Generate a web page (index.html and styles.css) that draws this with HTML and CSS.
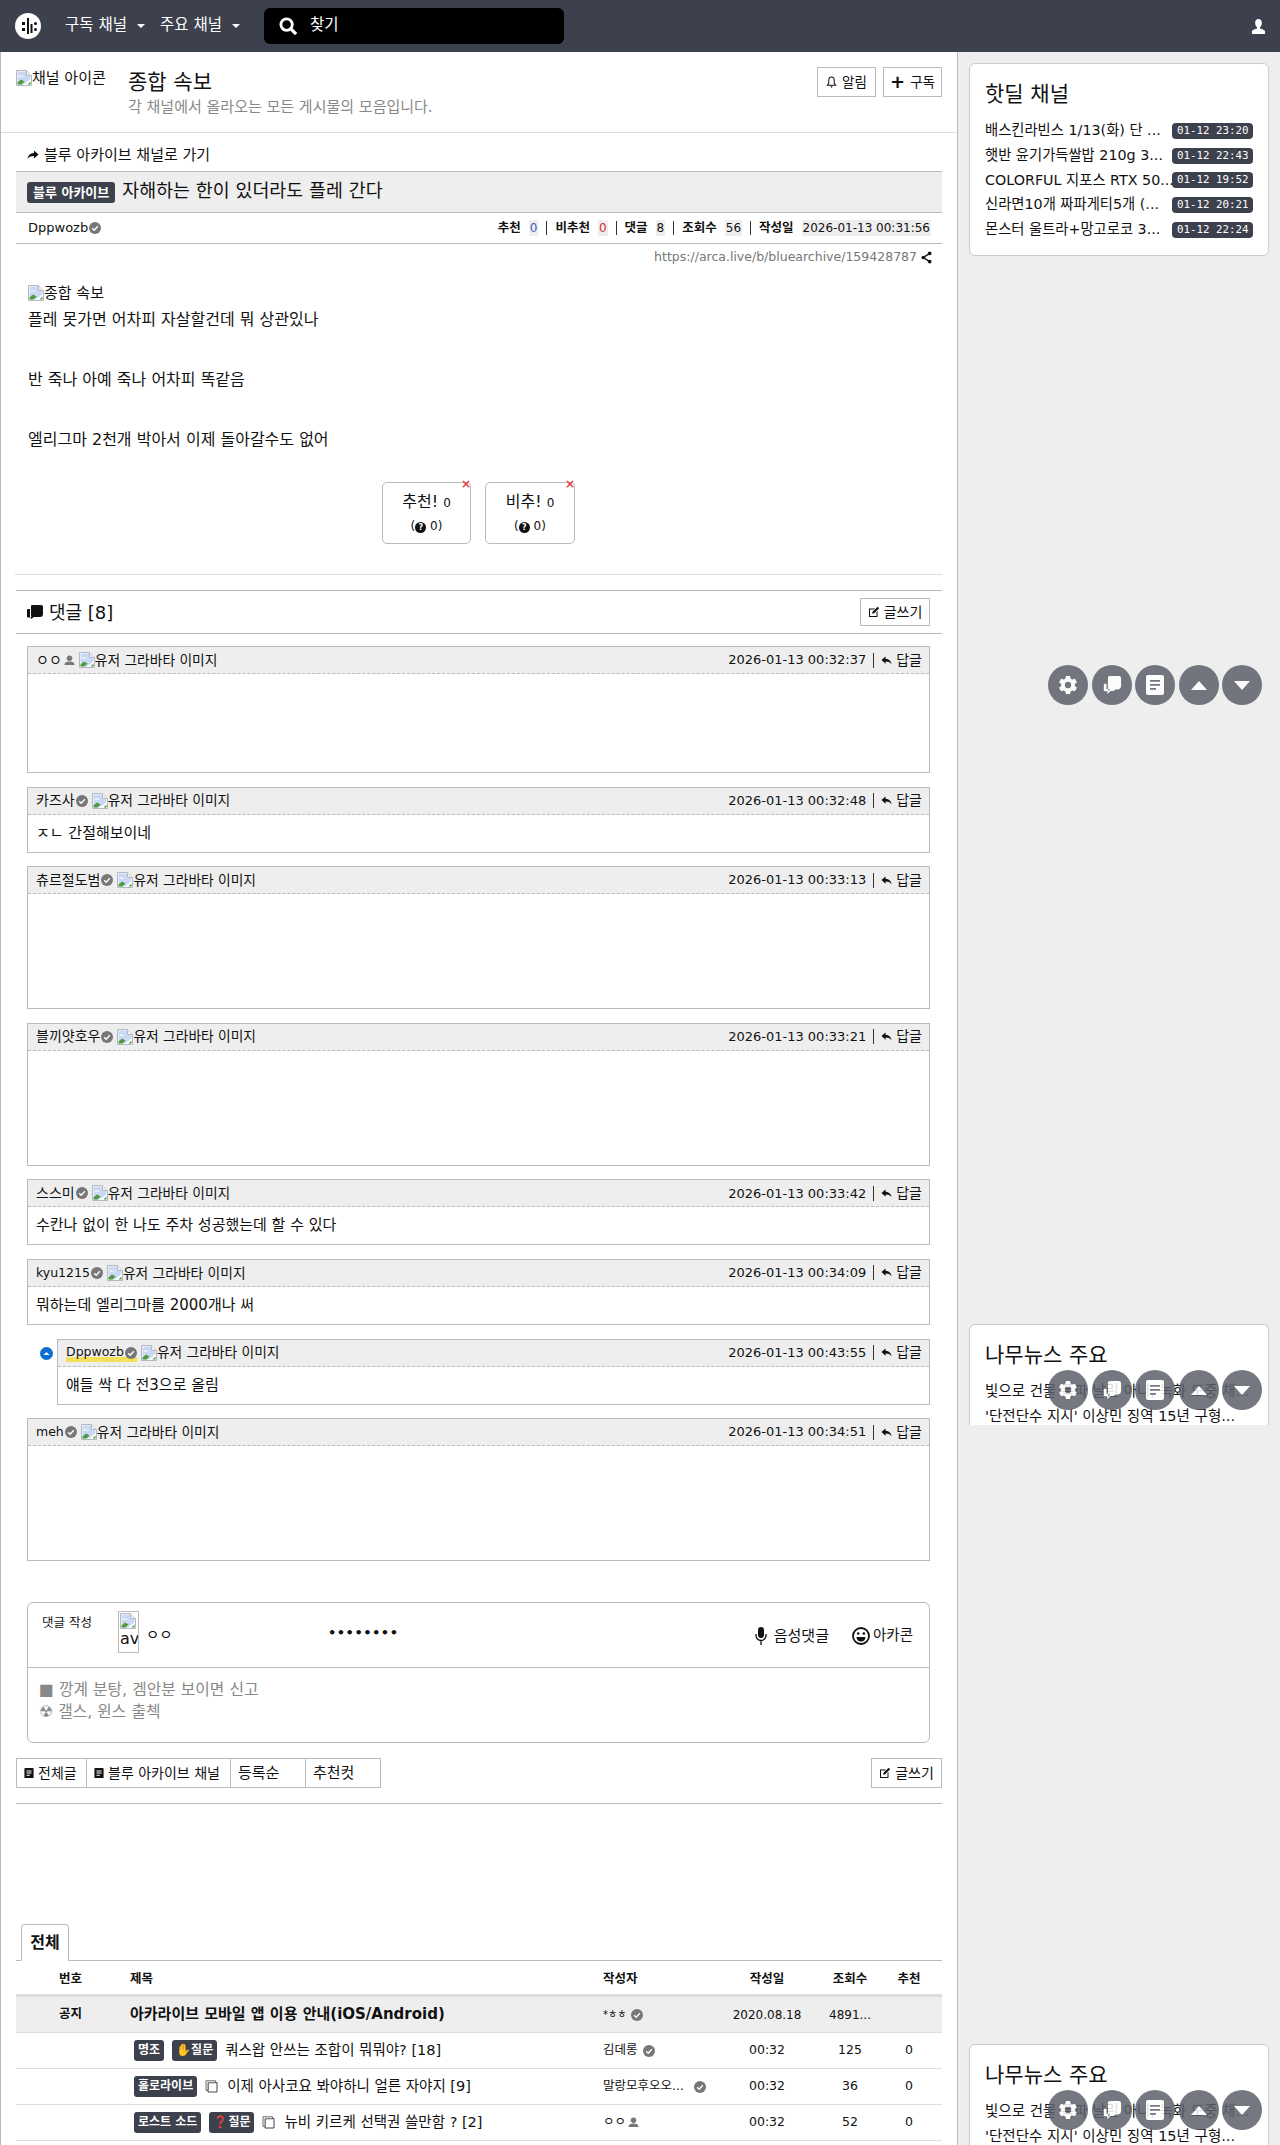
FILE: index.html
```html
<!DOCTYPE html>
<html lang="ko">
<head>
<meta charset="utf-8">
<title>자해하는 한이 있더라도 플레 간다</title>
<link rel="stylesheet" href="styles.css">
</head>
<body>
<svg class="sprite" aria-hidden="true">
  <symbol id="broken" viewBox="0 0 16 16"><path d="M.5.5h10l5 5v10H.5z" fill="#fff" stroke="#b4b9c0"/><path d="M10.5.5v5h5" fill="#eef0f2" stroke="#b4b9c0"/><path d="M1.5 1.5h8.5v4.5h4.5V9L8 14.5H1.500z" fill="#c9d8f5"/><path d="M2 7c1-2 3-2 4-1 .8-.6 2-.4 2.4.6H2z" fill="#fff"/><path d="M1.500 14.500v-2L5 9.500l3.500 2-3 3z" fill="#4f9a3d"/><path d="M14.500 14.500v-3l-3 3z" fill="#4f9a3d"/></symbol>
  <symbol id="check" viewBox="0 0 12 12"><circle cx="6" cy="6" r="6" fill="#777"/><path d="M3.200 6.200l2 2 3.600-4" fill="none" stroke="#fff" stroke-width="1.400"/></symbol>
  <symbol id="reply" viewBox="0 0 12 12"><path d="M5 1.500L.5 5.500 5 9.500V7c3 0 5 .8 6.500 3C11 6.500 9 4.300 5 4z" fill="#111"/></symbol>
  <symbol id="forward" viewBox="0 0 12 12"><path d="M7 1.500l4.500 4L7 9.500V7c-3 0-5 .8-6.500 3C1 6.500 3 4.300 7 4z" fill="#111"/></symbol>
  <symbol id="edit" viewBox="0 0 12 12"><path d="M1 2.500h6L6 3.500H2v6.500h6.500V6l1-1v6H1z" fill="#111"/><path d="M4.500 5.800L9.700.8l1.500 1.500-5 5-2 .4z" fill="#111"/></symbol>
  <symbol id="doc" viewBox="0 0 12 12"><path d="M1.500 0h9a1 1 0 0 1 1 1v10a1 1 0 0 1-1 1h-9a1 1 0 0 1-1-1V1a1 1 0 0 1 1-1z" fill="#111"/><path d="M3 3h6v1.200H3zM3 5.500h6v1.200H3zM3 8h4v1.200H3z" fill="#fff"/></symbol>
  <symbol id="page" viewBox="0 0 13 13"><path d="M3 2.500h9v9.500H3z" fill="#fff" stroke="#444"/><path d="M1 .8h9.500v2H3v7.500H1z" fill="#fff" stroke="#444" stroke-width=".8"/></symbol>
  <symbol id="gear" viewBox="0 0 20 20"><path d="M8 1h4l.6 2.600 1.700 1 2.600-.8 2 3.400-2 1.900v1.800l2 1.900-2 3.400-2.600-.8-1.700 1L12 19H8l-.6-2.600-1.700-1-2.600.8-2-3.400 2-1.900V9.100l-2-1.900 2-3.400 2.600.8 1.700-1z" fill="#fff"/><circle cx="10" cy="10" r="3.200" fill="#5d616b"/></symbol>
  <symbol id="chat" viewBox="0 0 22 22"><path d="M3 9.500h2v6h2v2.500l2.500-2.500h5l-1.500 2H9.500L6 21v-3H3.500A1.500 1.500 0 0 1 2 16.500V11A1.500 1.500 0 0 1 3 9.500z" fill="#fff"/><path d="M8.500 1h10A2.500 2.500 0 0 1 21 3.500v8a4.500 4.500 0 0 1-4.500 4.500H8A1.500 1.500 0 0 1 6.500 14.500V3A2 2 0 0 1 8.500 1z" fill="#fff"/></symbol>
  <symbol id="sheet" viewBox="0 0 20 20"><rect x="1" y="0" width="18" height="20" rx="2" fill="#fff"/><path d="M5 5h10v1.800H5zM5 9h10v1.800H5zM5 13h6v1.800H5z" fill="#5d616b"/></symbol>
  <symbol id="logo" viewBox="0 0 26 26"><circle cx="13" cy="13" r="13" fill="#fff"/><path d="M12 5h2v16h-2zM15.500 11h2v9h-2z" fill="#111"/><rect x="7" y="9" width="3" height="3" fill="#111"/><rect x="7" y="15" width="3" height="3" fill="#111"/><circle cx="20.500" cy="10.500" r="1.500" fill="#111"/><circle cx="20.500" cy="16.500" r="1.500" fill="#111"/></symbol>
</svg>

<header class="topbar">
  <svg class="logo"><use href="#logo"/></svg>
  <nav class="topnav">
    <span class="topnav-item">구독 채널<i class="caret"></i></span>
    <span class="topnav-item">주요 채널<i class="caret"></i></span>
  </nav>
  <div class="search">
    <svg class="search-icon" viewBox="0 0 20 20"><circle cx="8" cy="8" r="6" fill="none" stroke="#fff" stroke-width="3"/><path d="M12.500 12.500l5.500 5.500" stroke="#fff" stroke-width="3.500"/></svg>
    <span>찾기</span>
  </div>
  <svg class="user-icon" viewBox="0 0 16 16"><path d="M8 0c2.400 0 3.600 1.800 3.600 4.200 0 2-.9 3.600-2 4.400v1.400c2 .7 5.400 1.400 5.400 3.500V16H1v-2.500c0-2.100 3.400-2.800 5.400-3.500V8.600c-1.100-.8-2-2.400-2-4.400C4.400 1.800 5.600 0 8 0z" fill="#fff"/></svg>
</header>

<div class="layout">
  <main class="main">
    <section class="channel-head">
      <div class="channel-icon"><svg class="broken"><use href="#broken"/></svg><span>채널 아이콘</span></div>
      <div class="channel-text">
        <h1 class="channel-title">종합 속보</h1>
        <p class="channel-desc">각 채널에서 올라오는 모든 게시물의 모음입니다.</p>
      </div>
      <div class="channel-actions">
        <span class="btn btn-head"><svg class="ico-bell" viewBox="0 0 12 14"><path d="M6 1.500c2 0 3 1.500 3 3.500v3.500l1.500 2h-9l1.500-2V5c0-2 1-3.500 3-3.500z" fill="none" stroke="#111" stroke-width="1.100"/><path d="M4.800 11.500h2.400L6 13.500z" fill="#111"/></svg>알림</span>
        <span class="btn btn-head"><b class="plus">+</b>구독</span>
      </div>
    </section>

    <div class="content">
      <a class="back-link"><svg class="ico12"><use href="#forward"/></svg>블루 아카이브 채널로 가기</a>
      <div class="title-bar"><span class="badge badge-title">블루 아카이브</span><span class="post-title">자해하는 한이 있더라도 플레 간다</span></div>
      <div class="meta-row">
        <span class="meta-author">Dppwozb<svg class="check"><use href="#check"/></svg></span>
        <span class="meta-stats">
          <b>추천</b><em class="stat stat-up">0</em><i class="sep"></i>
          <b>비추천</b><em class="stat stat-down">0</em><i class="sep"></i>
          <b>댓글</b><em class="stat">8</em><i class="sep"></i>
          <b>조회수</b><em class="stat">56</em><i class="sep"></i>
          <b>작성일</b><em class="stat">2026-01-13 00:31:56</em>
        </span>
      </div>
      <div class="url-row">https://arca.live/b/bluearchive/159428787<svg class="ico-share" viewBox="0 0 12 14"><path d="M9.500 2.500L2.500 7l7 4.500" fill="none" stroke="#111" stroke-width="1.600"/><circle cx="9.500" cy="2.500" r="2" fill="#111"/><circle cx="2.500" cy="7" r="2" fill="#111"/><circle cx="9.500" cy="11.500" r="2" fill="#111"/></svg></div>

      <article class="article">
        <div class="article-img"><svg class="broken"><use href="#broken"/></svg><span>종합 속보</span></div>
        <p>플레 못가면 어차피 자살할건데 뭐 상관있나</p>
        <p>반 죽나 아예 죽나 어차피 똑같음</p>
        <p>엘리그마 2천개 박아서 이제 돌아갈수도 없어</p>
      </article>

      <div class="votes">
        <div class="vote"><i class="vote-x">×</i><div class="vote-main">추천! <small>0</small></div><div class="vote-sub">(<i class="q">?</i> 0)</div></div>
        <div class="vote vote-down"><i class="vote-x">×</i><div class="vote-main">비추! <small>0</small></div><div class="vote-sub">(<i class="q">?</i> 0)</div></div>
      </div>

      <div class="comments-title">
        <span class="comments-heading"><svg class="ico-comments" viewBox="0 0 16 14"><path d="M5 0h9a2 2 0 0 1 2 2v7a3 3 0 0 1-3 3H5a1 1 0 0 1-1-1V1a1 1 0 0 1 1-1z" fill="#111"/><path d="M0 5a1 1 0 0 1 1-1h2v8h4l-3 2v-1.500H1a1 1 0 0 1-1-1z" fill="#111"/></svg>댓글 [8]</span>
        <span class="btn btn-write"><svg class="ico12"><use href="#edit"/></svg>글쓰기</span>
      </div>

      <div class="comment comment-img">
        <div class="comment-head"><span class="nick nick-ko">ㅇㅇ<svg class="ico-person" viewBox="0 0 12 12"><circle cx="6" cy="3.500" r="3" fill="#777"/><path d="M.5 11c0-3 2.500-4 5.500-4s5.500 1 5.500 4z" fill="#777"/></svg></span><svg class="broken"><use href="#broken"/></svg><span class="alt">유저 그라바타 이미지</span><span class="comment-right">2026-01-13 00:32:37<i class="sep"></i><svg class="ico12"><use href="#reply"/></svg><span class="reply-word">답글</span></span></div>
      </div>
      <div class="comment">
        <div class="comment-head"><span class="nick nick-ko">카즈사<svg class="check"><use href="#check"/></svg></span><svg class="broken"><use href="#broken"/></svg><span class="alt">유저 그라바타 이미지</span><span class="comment-right">2026-01-13 00:32:48<i class="sep"></i><svg class="ico12"><use href="#reply"/></svg><span class="reply-word">답글</span></span></div>
        <div class="comment-body">ㅈㄴ 간절해보이네</div>
      </div>
      <div class="comment comment-img comment-tall">
        <div class="comment-head"><span class="nick nick-ko">츄르절도범<svg class="check"><use href="#check"/></svg></span><svg class="broken"><use href="#broken"/></svg><span class="alt">유저 그라바타 이미지</span><span class="comment-right">2026-01-13 00:33:13<i class="sep"></i><svg class="ico12"><use href="#reply"/></svg><span class="reply-word">답글</span></span></div>
      </div>
      <div class="comment comment-img comment-tall">
        <div class="comment-head"><span class="nick nick-ko">블끼얏호우<svg class="check"><use href="#check"/></svg></span><svg class="broken"><use href="#broken"/></svg><span class="alt">유저 그라바타 이미지</span><span class="comment-right">2026-01-13 00:33:21<i class="sep"></i><svg class="ico12"><use href="#reply"/></svg><span class="reply-word">답글</span></span></div>
      </div>
      <div class="comment">
        <div class="comment-head"><span class="nick nick-ko">스스미<svg class="check"><use href="#check"/></svg></span><svg class="broken"><use href="#broken"/></svg><span class="alt">유저 그라바타 이미지</span><span class="comment-right">2026-01-13 00:33:42<i class="sep"></i><svg class="ico12"><use href="#reply"/></svg><span class="reply-word">답글</span></span></div>
        <div class="comment-body">수칸나 없이 한 나도 주차 성공했는데 할 수 있다</div>
      </div>
      <div class="comment">
        <div class="comment-head"><span class="nick">kyu1215<svg class="check"><use href="#check"/></svg></span><svg class="broken"><use href="#broken"/></svg><span class="alt">유저 그라바타 이미지</span><span class="comment-right">2026-01-13 00:34:09<i class="sep"></i><svg class="ico12"><use href="#reply"/></svg><span class="reply-word">답글</span></span></div>
        <div class="comment-body">뭐하는데 엘리그마를 2000개나 써</div>
      </div>
      <div class="comment-reply">
        <svg class="reply-dot" viewBox="0 0 13 13"><circle cx="6.500" cy="6.500" r="6.500" fill="#0a6fd0"/><path d="M3.500 8l3-3 3 3z" fill="#fff"/></svg>
        <div class="comment">
          <div class="comment-head"><span class="nick nick-op">Dppwozb<svg class="check"><use href="#check"/></svg></span><svg class="broken"><use href="#broken"/></svg><span class="alt">유저 그라바타 이미지</span><span class="comment-right">2026-01-13 00:43:55<i class="sep"></i><svg class="ico12"><use href="#reply"/></svg><span class="reply-word">답글</span></span></div>
          <div class="comment-body">얘들 싹 다 전3으로 올림</div>
        </div>
      </div>
      <div class="comment comment-img comment-tall">
        <div class="comment-head"><span class="nick">meh<svg class="check"><use href="#check"/></svg></span><svg class="broken"><use href="#broken"/></svg><span class="alt">유저 그라바타 이미지</span><span class="comment-right">2026-01-13 00:34:51<i class="sep"></i><svg class="ico12"><use href="#reply"/></svg><span class="reply-word">답글</span></span></div>
      </div>

      <section class="write">
        <div class="write-top">
          <span class="write-label">댓글 작성</span>
          <span class="avatar"><svg class="broken"><use href="#broken"/></svg><span>av</span></span>
          <span class="write-nick">ㅇㅇ</span>
          <span class="write-pass">••••••••</span>
          <span class="write-tool write-voice"><svg class="ico-mic" viewBox="0 0 12 18"><rect x="3" y="0" width="6" height="11" rx="3" fill="#111"/><path d="M1 7v1.500a5 5 0 0 0 10 0V7M6 13.500V18" fill="none" stroke="#111" stroke-width="1.300"/></svg>음성댓글</span>
          <span class="write-tool"><svg class="ico-smile" viewBox="0 0 18 18"><circle cx="9" cy="9" r="8" fill="#fff" stroke="#111" stroke-width="1.800"/><circle cx="6.200" cy="6.500" r="1.300" fill="#111"/><circle cx="11.800" cy="6.500" r="1.300" fill="#111"/><path d="M4.500 10h9c0 3-2 4.500-4.500 4.500S4.500 13 4.500 10z" fill="#111"/></svg>아카콘</span>
        </div>
        <div class="write-body">
          <p>■ 깡계 분탕, 겜안분 보이면 신고</p>
          <p>☢ 갤스, 윈스 출첵</p>
        </div>
      </section>

      <div class="toolbar">
        <div class="toolbar-group">
          <span class="tool tool-all"><svg class="ico12"><use href="#doc"/></svg>전체글</span>
          <span class="tool tool-channel"><svg class="ico12"><use href="#doc"/></svg>블루 아카이브 채널</span>
          <span class="tool tool-sort">등록순</span>
          <span class="tool tool-sort">추천컷</span>
        </div>
        <span class="btn btn-write btn-write-lg"><svg class="ico12"><use href="#edit"/></svg>글쓰기</span>
      </div>

      <div class="tabs"><span class="tab">전체</span></div>

      <div class="board">
        <div class="row row-head"><span class="col-no">번호</span><span>제목</span><span>작성자</span><span class="col-c">작성일</span><span class="col-c">조회수</span><span class="col-c">추천</span></div>
        <div class="row row-notice"><span class="col-no">공지</span><span class="row-title notice-title">아카라이브 모바일 앱 이용 안내(iOS/Android)</span><span class="author notice-author">*ㅎㅎ<svg class="check"><use href="#check"/></svg></span><span class="col-c">2020.08.18</span><span class="col-c">4891...</span><span class="col-c"></span></div>
        <div class="row"><span></span><span class="row-title"><span class="badge badge-row">명조</span><span class="badge badge-row">✋질문</span>쿼스왑 안쓰는 조합이 뭐뭐야? [18]</span><span class="author">김데롱<svg class="check"><use href="#check"/></svg></span><span class="col-c">00:32</span><span class="col-c">125</span><span class="col-c">0</span></div>
        <div class="row"><span></span><span class="row-title"><span class="badge badge-row">홀로라이브</span><svg class="ico-page"><use href="#page"/></svg>이제 아사코요 봐야하니 얼른 자야지 [9]</span><span class="author">말랑모후오오...<svg class="check check-far"><use href="#check"/></svg></span><span class="col-c">00:32</span><span class="col-c">36</span><span class="col-c">0</span></div>
        <div class="row"><span></span><span class="row-title"><span class="badge badge-row">로스트 소드</span><span class="badge badge-row"><span class="q-red">❓</span>질문</span><svg class="ico-page"><use href="#page"/></svg>뉴비 키르케 선택권 쓸만함 ? [2]</span><span class="author">ㅇㅇ<svg class="ico-person" viewBox="0 0 12 12"><circle cx="6" cy="3.500" r="3" fill="#777"/><path d="M.5 11c0-3 2.500-4 5.500-4s5.500 1 5.500 4z" fill="#777"/></svg></span><span class="col-c">00:32</span><span class="col-c">52</span><span class="col-c">0</span></div>
      </div>
    </div>
  </main>

  <aside class="side">
    <section class="card card-hot">
      <h2 class="card-title">핫딜 채널</h2>
      <div class="deal"><span class="deal-name">배스킨라빈스 1/13(화) 단 ...</span><span class="deal-time">01-12 23:20</span></div>
      <div class="deal"><span class="deal-name">햇반 윤기가득쌀밥 210g 3...</span><span class="deal-time">01-12 22:43</span></div>
      <div class="deal"><span class="deal-name">COLORFUL 지포스 RTX 50...</span><span class="deal-time">01-12 19:52</span></div>
      <div class="deal"><span class="deal-name">신라면10개 짜파게티5개 (...</span><span class="deal-time">01-12 20:21</span></div>
      <div class="deal"><span class="deal-name">몬스터 울트라+망고로코 3...</span><span class="deal-time">01-12 22:24</span></div>
    </section>
    <section class="card card-news card-clip">
      <h2 class="card-title card-title-news">나무뉴스 주요</h2>
      <div class="news">빛으로 건물 폭파 날린 아니, 녹화 도중 채...</div>
      <div class="news">'단전단수 지시' 이상민 징역 15년 구형...</div>
    </section>
    <section class="card card-news">
      <h2 class="card-title card-title-news">나무뉴스 주요</h2>
      <div class="news">빛으로 건물 폭파 날린 아니, 녹화 도중 채...</div>
      <div class="news">'단전단수 지시' 이상민 징역 15년 구형...</div>
    </section>

    <div class="float-bar float-1">
      <span class="fab"><svg class="fab-ico"><use href="#gear"/></svg></span><span class="fab"><svg class="fab-ico"><use href="#chat"/></svg></span><span class="fab"><svg class="fab-ico"><use href="#sheet"/></svg></span><span class="fab"><i class="tri-up"></i></span><span class="fab"><i class="tri-down"></i></span>
    </div>
    <div class="float-bar float-2">
      <span class="fab"><svg class="fab-ico"><use href="#gear"/></svg></span><span class="fab"><svg class="fab-ico"><use href="#chat"/></svg></span><span class="fab"><svg class="fab-ico"><use href="#sheet"/></svg></span><span class="fab"><i class="tri-up"></i></span><span class="fab"><i class="tri-down"></i></span>
    </div>
    <div class="float-bar float-3">
      <span class="fab"><svg class="fab-ico"><use href="#gear"/></svg></span><span class="fab"><svg class="fab-ico"><use href="#chat"/></svg></span><span class="fab"><svg class="fab-ico"><use href="#sheet"/></svg></span><span class="fab"><i class="tri-up"></i></span><span class="fab"><i class="tri-down"></i></span>
    </div>
  </aside>
</div>
</body>
</html>
```
FILE: styles.css
```css
* { box-sizing: border-box; }
html, body { margin: 0; height: 2145px; overflow: hidden; }
body {
  font-family: "DejaVu Sans", "Noto Sans CJK KR", sans-serif;
  font-size: 14px;
  line-height: 1.5;
  color: #111;
  background: #eee;
}
p, h1, h2 { margin: 0; font-weight: 400; }
em, i { font-style: normal; }
.sprite { display: none; }

.topbar { height: 52px; background: #3d414d; display: flex; align-items: center; color: #fff; padding-left: 15px; padding-right: 14px; }
.logo { width: 26px; height: 26px; flex: none; }
.topnav { display: flex; margin-left: 24px; gap: 15px; }
.topnav-item { font-size: 15.5px; display: flex; align-items: center; width: 80px; white-space: nowrap; }
.caret { width: 0; height: 0; border: 4px solid transparent; border-top-color: #fff; border-bottom: 0; margin-left: 10px; }
.search { margin-left: 24px; width: 300px; height: 36px; background: #000; border-radius: 6px; display: flex; align-items: center; padding-left: 15px; font-size: 15.5px; }
.search-icon { width: 19px; height: 19px; margin-right: 12px; }
.user-icon { width: 15px; height: 15px; margin-left: auto; }

.layout { display: flex; position: relative; height: 2093px; }
.main { width: 958px; flex: none; background: #fff; border-left: 1px solid #bbb; border-right: 1px solid #bbb; }
.side { flex: 1; background: #eee; padding: 11px 11px 0; overflow: hidden; }

.channel-head { height: 81px; border-bottom: 1px solid #ddd; display: flex; padding: 15px 15px 0; }
.channel-icon { width: 112px; flex: none; display: flex; align-items: flex-start; font-size: 15px; line-height: 16px; height: 19px; padding-top: 3px; white-space: nowrap; }
.channel-icon span { width: 95px; overflow: hidden; }
.broken { width: 16px; height: 16px; flex: none; display: inline-block; vertical-align: text-bottom; }
.channel-title { font-size: 21px; line-height: 28px; margin-top: 1px; }
.channel-desc { font-size: 15px; color: #888; line-height: 20px; margin-top: 1px; }
.channel-text { flex: 1; }
.channel-actions { display: flex; gap: 7px; }
.btn { border: 1px solid #bbb; display: inline-flex; align-items: center; justify-content: center; background: #fff; font-size: 13.5px; white-space: nowrap; }
.btn-head { width: 59px; height: 30px; }
.ico-bell { width: 11px; height: 14px; margin-right: 5px; }
.plus { font-size: 18px; line-height: 1; margin-right: 5px; }

.content { padding: 0 15px; }
.back-link { display: flex; align-items: center; height: 38px; padding-left: 11px; padding-top: 6px; font-size: 15px; }
.ico12 { width: 12px; height: 12px; flex: none; margin-right: 5px; }
.title-bar { height: 42px; background: #eee; border-top: 1px solid #bbb; border-bottom: 1px solid #bbb; display: flex; align-items: center; padding-left: 11px; }
.badge { background: #3d414d; color: #fff; border-radius: 3px; font-weight: 700; white-space: nowrap; display: inline-block; }
.badge-title { font-size: 13px; line-height: 21px; padding: 0 6px; margin-right: 7px; }
.post-title { font-size: 18.4px; line-height: 24px; margin-top: -2px; }
.meta-row { height: 31px; border-bottom: 1px solid #bbb; display: flex; align-items: center; justify-content: space-between; padding: 0 11px 0 12px; font-size: 12px; }
.meta-author { font-size: 13px; display: flex; align-items: center; }
.check { width: 12px; height: 12px; flex: none; margin-left: 1px; }
.meta-stats { display: flex; align-items: center; }
.meta-stats b { font-size: 12.5px; }
.stat { background: #eee; padding: 0 1px; margin-left: 8px; font-size: 12px; line-height: 16px; }
.stat-up { color: #3b5fc9; }
.stat-down { color: #d03030; }
.sep { display: inline-block; width: 1px; height: 14px; background: #333; margin: 0 8px; }
.url-row { height: 26px; display: flex; align-items: center; justify-content: flex-end; padding-right: 10px; font-size: 12.5px; color: #777; }
.ico-share { width: 11px; height: 13px; margin-left: 4px; }

.article { padding: 15px 12px 0; font-size: 16px; height: 212px; }
.article-img { display: flex; align-items: center; line-height: 16px; height: 16px; font-size: 15px; margin-bottom: 4px; }
.article p { line-height: 30px; margin-bottom: 30px; }

.votes { display: flex; justify-content: center; gap: 14px; height: 93px; border-bottom: 1px solid #ddd; margin-left: -1px; }
.vote { width: 89px; height: 62px; border: 1px solid #bbb; border-radius: 5px; position: relative; text-align: center; padding-top: 7px; font-size: 16px; line-height: 23px; }
.vote-down { width: 90px; }
.vote-main small { font-size: 12px; }
.vote-sub { font-size: 12px; }
.q { display: inline-block; width: 11px; height: 11px; border-radius: 50%; background: #111; color: #fff; font-size: 8px; line-height: 11px; font-weight: 700; }
.vote-x { position: absolute; right: -1px; top: -5px; color: #e04040; font-size: 12px; line-height: 12px; font-weight: 700; }

.comments-title { margin-top: 15px; margin-bottom: 12px; height: 44px; border-top: 1px solid #bbb; border-bottom: 1px solid #bbb; display: flex; align-items: center; justify-content: space-between; padding: 0 12px 0 11px; }
.comments-heading { font-size: 18px; display: flex; align-items: center; }
.ico-comments { width: 16px; height: 14px; margin-right: 6px; }
.btn-write { width: 70px; height: 28px; font-size: 14px; }
.btn-write .ico12 { margin-right: 4px; }
.comment { border: 1px solid #bbb; margin: 0 12px 13.6px 11px; height: 66px; background: #fff; }
.comment-img { height: 127px; }
.comment-tall { height: 143px; }
.comment-head { height: 27px; background: #eee; border-bottom: 1px dashed #bbb; display: flex; align-items: center; padding: 0 7px 0 8px; font-size: 13.75px; white-space: nowrap; }
.nick { display: flex; align-items: center; font-size: 12.5px; }
.nick-ko { font-size: 14px; }
.nick-op { background: linear-gradient(transparent 72%, #f5e05a 72%); }
.ico-person { width: 11px; height: 11px; margin-left: 2px; flex: none; }
.comment-head > .broken { margin-left: 4px; }
.comment-right { margin-left: auto; display: flex; align-items: center; font-size: 13px; }
.reply-word { font-size: 14px; }
.comment-right .sep { margin: 0 7px; height: 15px; }
.comment-right .ico12 { width: 11px; height: 11px; margin-right: 4px; }
.comment-body { padding: 0 8px; line-height: 37px; font-size: 15px; }
.comment-reply { display: flex; align-items: flex-start; padding-left: 24px; }
.reply-dot { width: 13px; height: 13px; flex: none; margin-top: 8px; }
.comment-reply .comment { flex: 1; margin-left: 4px; }

.write { border: 1px solid #bbb; border-radius: 6px; height: 141px; margin: 41px 12px 0 11px; }
.write-top { height: 65px; border-bottom: 1px solid #bbb; display: flex; align-items: flex-start; font-size: 12.5px; }
.write-label { font-size: 12.5px; margin: 11px 0 0 14px; width: 76px; flex: none; }
.avatar { width: 21px; height: 42px; border: 1px solid #bbb; margin-top: 8px; overflow: hidden; font-size: 16px; line-height: 20px; flex: none; display: block; padding: 1px 0 0 1px; }
.avatar .broken { display: block; }
.write-nick { margin: 22px 0 0 7px; font-size: 14.5px; width: 183px; flex: none; }
.write-pass { margin-top: 20px; font-size: 13px; letter-spacing: .5px; font-weight: 700; margin-left: -1px; }
.write-tool { display: flex; align-items: center; margin-top: 22px; font-size: 14.5px; white-space: nowrap; }
.write-voice { margin-left: auto; margin-right: 23px; font-size: 15px; }
.write-tool:last-child { margin-right: 16px; }
.ico-mic { width: 12px; height: 18px; margin-right: 7px; }
.ico-smile { width: 18px; height: 18px; margin-right: 3px; }
.write-body { padding: 11px 11px; color: #888; font-size: 15.8px; line-height: 22px; }

.toolbar { display: flex; justify-content: space-between; margin-top: 15px; padding-bottom: 15px; border-bottom: 1px solid #bbb; box-sizing: content-box; height: 30px; }
.toolbar-group { display: flex; }
.tool { border: 1px solid #bbb; height: 30px; display: flex; align-items: center; padding-left: 7px; font-size: 14px; margin-right: -1px; white-space: nowrap; }
.tool .ico12 { width: 10px; height: 12px; margin-right: 4px; }
.tool-all { width: 71px; }
.tool-channel { width: 145px; }
.tool-sort { width: 76px; font-size: 15px; }
.btn-write-lg { width: 71px; height: 30px; }

.tabs { height: 157px; border-bottom: 1px solid #bbb; padding-left: 5px; display: flex; align-items: flex-end; }
.tab { width: 48px; height: 37px; border: 1px solid #bbb; border-bottom: 1px solid #fff; margin-bottom: -1px; border-radius: 4px 4px 0 0; text-align: center; font-weight: 700; font-size: 16px; line-height: 35px; background: #fff; }

.board { font-size: 12.5px; }
.row { display: grid; grid-template-columns: 114px 473px 119px 90px 76px 42px 12px; align-items: center; height: 36px; border-bottom: 1px solid #ddd; white-space: nowrap; }
.row-head { font-weight: 700; font-size: 12.5px; border-bottom: 3px solid #ddd; padding-top: 3px; }
.row-notice { background: #eee; font-size: 12px; }
.col-no { padding-left: 43px; font-size: 12.5px; font-weight: 700; }
.col-c { text-align: center; }
.row-title { display: flex; align-items: center; padding-left: 4px; font-size: 14.5px; }
.notice-title { font-weight: 700; padding-left: 0; font-size: 15px; }
.badge-row { font-size: 12px; line-height: 21px; padding: 0 4px; margin-right: 8px; }
.ico-page { width: 13px; height: 13px; flex: none; margin-right: 9px; }
.author { display: flex; align-items: center; font-size: 12.5px; }
.author .check { margin-left: 5px; }
.author .check.check-far { margin-left: 10px; }
.notice-author { font-size: 10px; }
.q-red { color: #e03030; }

.card { width: 300px; background: #fff; border: 1px solid #ccc; border-radius: 6px; padding: 15px 15px 0; }
.card-hot { height: 193px; margin-bottom: 1068px; }
.card-news { height: 200px; }
.card-clip { height: 101px; overflow: hidden; margin-bottom: 619px; border-bottom: 0; border-radius: 6px 6px 0 0; }
.card-title { font-size: 21px; line-height: 30px; margin-bottom: 9.5px; }
.card-title-news { margin-bottom: 9px; }
.deal { display: flex; align-items: center; justify-content: space-between; height: 24.7px; font-size: 14.3px; white-space: nowrap; }
.deal-name { width: 183px; }
.deal-time { background: #3d414d; color: #fff; font-family: "DejaVu Sans Mono", monospace; font-size: 10.8px; line-height: 16px; padding: 0 4.5px; border-radius: 4px; flex: none; }
.news { white-space: nowrap; font-size: 14.5px; height: 24.5px; line-height: 24.5px; }

.float-bar { position: absolute; left: 1048px; display: flex; gap: 3.5px; }
.float-1 { top: 613px; }
.float-2 { top: 1318px; }
.float-3 { top: 2038px; }
.fab { width: 40px; height: 40px; border-radius: 50%; background: #5d616b; opacity: .85; display: flex; align-items: center; justify-content: center; }
.fab-ico { width: 20px; height: 20px; }
.tri-up, .tri-down { width: 0; height: 0; border-left: 8px solid transparent; border-right: 8px solid transparent; }
.tri-up { border-bottom: 9px solid #fff; }
.tri-down { border-top: 9px solid #fff; }
```
